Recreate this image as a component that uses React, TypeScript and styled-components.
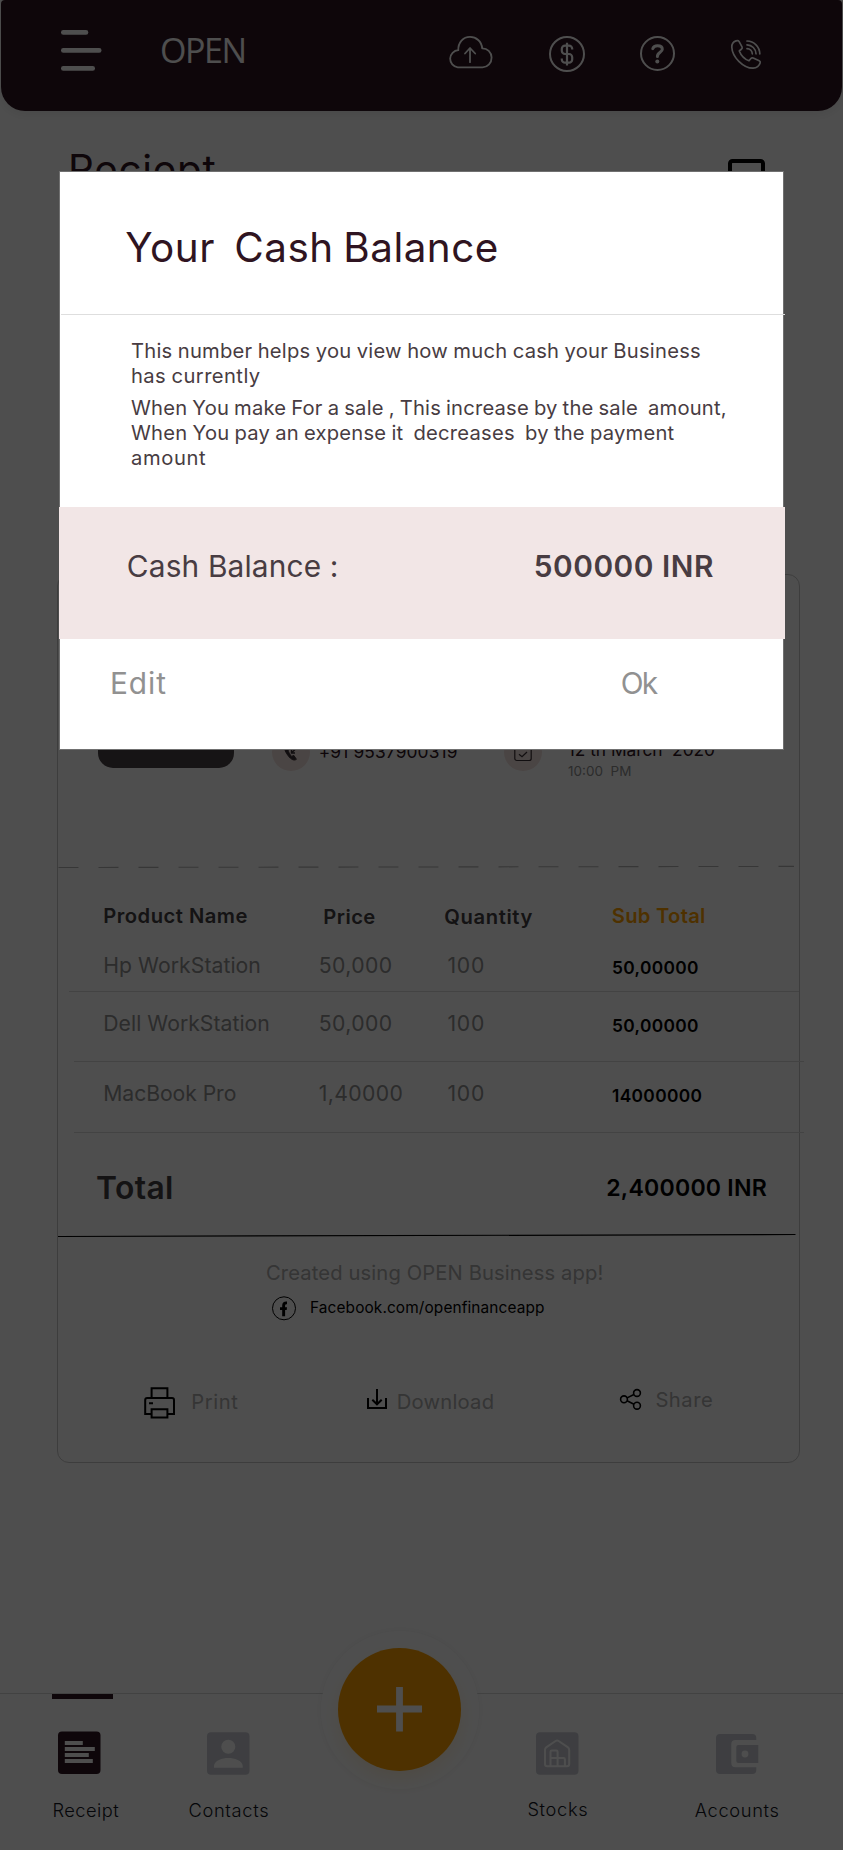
import React from "react";
import styled, { createGlobalStyle } from "styled-components";

const ink = "#2f1421";
const amber = "#ffa200";
const idle = "#c9ccd4";

const GlobalStyle = createGlobalStyle`
  body { margin: 0; background: #fff; }
  * { box-sizing: border-box; }
  svg { display: block; flex: none; overflow: visible; }
`;

const Screen = styled.div`
  position: relative;
  width: 843px;
  height: 1850px;
  display: flex;
  flex-direction: column;
  background: #fff;
  overflow: hidden;
  font-family: Inter, "Liberation Sans", sans-serif;
`;

const Text = styled.span<{ size: number; line?: number; track?: number; words?: number; weight?: number; color?: string; left?: number; top?: number }>`
  display: block;
  white-space: pre;
  font-size: ${(p) => p.size}px;
  line-height: ${(p) => p.line ?? 24}px;
  letter-spacing: ${(p) => p.track ?? 0}px;
  word-spacing: ${(p) => p.words ?? 0}px;
  font-weight: ${(p) => p.weight ?? 400};
  color: ${(p) => p.color ?? "#000"};
  margin-left: ${(p) => p.left ?? 0}px;
  margin-top: ${(p) => p.top ?? 0}px;
`;

/* ---------- top bar ---------- */

const TopBar = styled.header`
  display: flex;
  align-items: flex-start;
  flex: none;
  height: 111px;
  margin: 0 1px;
  padding: 30px 0 0 60px;
  background: ${ink};
  border-radius: 4px 4px 24px 24px;
  box-shadow: 0 3px 12px rgba(0, 0, 0, 0.08);
`;

const Brand = styled.h1`
  margin: 0 0 0 58px;
  width: 288px;
  font: 400 34px/40px "Open Sans", sans-serif;
  letter-spacing: -1.4px;
  color: #fff;
`;

const TopIcons = styled.div`
  display: flex;
  align-items: flex-start;
`;

const IconSlot = styled.div<{ left?: number; top?: number }>`
  flex: none;
  margin-left: ${(p) => p.left ?? 0}px;
  margin-top: ${(p) => p.top ?? 0}px;
`;

const PageHead = styled.div`
  display: flex;
  justify-content: space-between;
  align-items: flex-start;
  flex: none;
  height: 463px;
  padding: 34px 78px 0 68px;
`;

/* ---------- receipt card ---------- */

const Card = styled.section`
  flex: none;
  width: 743px;
  height: 889px;
  margin-left: 57px;
  padding-top: 148px;
  border: 1px solid #c8c8c8;
  border-radius: 12px;
`;

const InfoRow = styled.div`
  display: flex;
  align-items: flex-start;
  height: 60px;
  padding-left: 40px;
`;

const PayButton = styled.div`
  width: 136px;
  height: 45px;
  border-radius: 15px;
  background: #494145;
`;

const Bubble = styled.div<{ left: number }>`
  display: flex;
  align-items: center;
  justify-content: center;
  width: 38px;
  height: 38px;
  margin: 10px 0 0 ${(p) => p.left}px;
  border-radius: 50%;
  background: #f3e1dd;
`;

const DashLine = styled.svg`
  margin-top: 82px;
`;

const HeadRow = styled.div`
  display: grid;
  grid-template-columns: 220px 121px 167.5px 1fr;
  height: 84px;
  padding: 34.7px 0 0 45.3px;
`;

const ItemRow = styled.div<{ height: number; pad: number }>`
  display: grid;
  grid-template-columns: 215.5px 128.7px 164.5px 1fr;
  align-content: start;
  height: ${(p) => p.height}px;
  padding: ${(p) => p.pad}px 0 0 45.3px;
`;

const Rule = styled.div<{ left: number; over: number }>`
  height: 1px;
  margin: 0 ${(p) => -p.over}px 0 ${(p) => p.left}px;
  background: #dcdcdc;
`;

const TotalRow = styled.div`
  display: flex;
  justify-content: space-between;
  height: 100px;
  padding: 37px 32px 0 38px;
`;

const TotalLine = styled.svg`
  margin-left: -0.5px;
`;

const FacebookRow = styled.div`
  display: flex;
  margin: 10.5px 0 0 214px;
`;

const Actions = styled.div`
  display: flex;
  align-items: flex-start;
  margin-top: 67.5px;
  padding-left: 86px;
`;

/* ---------- bottom navigation ---------- */

const BottomNav = styled.nav`
  position: relative;
  display: flex;
  flex: none;
  height: 157px;
  margin-top: 230px;
  border-top: 1px solid #d6d6d6;
`;

const ActiveBar = styled.div`
  position: absolute;
  top: 0;
  left: 52px;
  width: 61px;
  height: 4.7px;
  background: ${ink};
`;

const NavItem = styled.div<{ width: number; left: number; inset: number }>`
  width: ${(p) => p.width}px;
  margin-left: ${(p) => p.left}px;
  padding-top: 38px;
  svg {
    margin-left: ${(p) => p.inset}px;
    height: 43px;
  }
`;

const AddRing = styled.div`
  position: absolute;
  left: 320.7px;
  top: -63.5px;
  display: flex;
  align-items: center;
  justify-content: center;
  width: 158px;
  height: 158px;
  border-radius: 50%;
  background: #fff;
  box-shadow: 0 0 10px rgba(0, 0, 0, 0.06);
`;

const AddButton = styled.div`
  display: flex;
  align-items: center;
  justify-content: center;
  width: 122.5px;
  height: 122.5px;
  border-radius: 50%;
  background: ${amber};
  box-shadow: 0 8px 18px rgba(255, 162, 0, 0.14);
`;

/* ---------- dialog ---------- */

const Scrim = styled.div`
  position: absolute;
  inset: 0;
  background: rgba(0, 0, 0, 0.696);
`;

const Dialog = styled.div`
  position: absolute;
  left: 59px;
  top: 171px;
  width: 725px;
  height: 579px;
  border: 1px solid #707070;
  background: #fff;
`;

const DialogHead = styled.div`
  height: 142px;
  padding: 51.2px 0 0 65.3px;
`;

const DialogRule = styled.div`
  height: 1px;
  margin: 0 -2px 0 1px;
  background: #dedede;
`;

const DialogBody = styled.div`
  height: 192px;
  padding: 23.3px 0 0 71px;
`;

const Paragraph = styled.div`
  margin-bottom: 7px;
`;

const Balance = styled.div`
  display: flex;
  height: 132px;
  margin: 0 -2px 0 -1px;
  padding: 41.2px 0 0 67.8px;
  background: #f2e6e6;
`;

const Choices = styled.div`
  display: flex;
  padding: 26px 0 0 50px;
`;

const bodyTone = "#483c42";

const BodyLine = ({ track, words = -0.8, children }: { track: number; words?: number; children: string }) => (
  <Text size={20.2} line={25} track={track} words={words} color={bodyTone}>{children}</Text>
);

const items = [
  { name: "Hp WorkStation", nameTrack: 0.05, price: "50,000", priceTrack: 0.41, sub: "50,00000", height: 38, pad: 0.3, left: 10.5, over: 0 },
  { name: "Dell WorkStation", nameTrack: 0.03, price: "50,000", priceTrack: 0.41, sub: "50,00000", height: 69, pad: 19.3, left: 15.5, over: 5 },
  { name: "MacBook Pro", nameTrack: -0.08, price: "1,40000", priceTrack: 0.35, sub: "14000000", height: 70, pad: 19.3, left: 15.5, over: 5 },
];

const itemTone = "#8f8f8f";
const headTone = "#443e41";
const mutedTone = "#acacac";

function Header() {
  return (
    <TopBar>
      <svg width="41" height="42" fill="#fff">
        <rect x="0" y="0" width="27.3" height="4.7" rx="2.3" />
        <rect x="0" y="18" width="40.5" height="4.7" rx="2.3" />
        <rect x="0" y="36" width="34" height="4.7" rx="2.3" />
      </svg>
      <Brand>OPEN</Brand>
      <TopIcons>
        <IconSlot top={6}>
          <svg width="44" height="33" fill="none" stroke="#fff" strokeWidth="1.8" strokeLinecap="round" strokeLinejoin="round">
            <path d="M9.8 31.3H34.6A9.1 9.4 0 0 0 34.2 12.3C33.6 5.3 28.2 .9 22 .9C15.2 .9 10 6.3 10.3 14.2A8.8 8.6 0 0 0 9.8 31.3Z" />
            <path d="M22 26.2V12.2M17 17.5L22 12L27.2 17.5" />
          </svg>
        </IconSlot>
        <IconSlot left={57} top={6}>
          <svg width="36" height="36" fill="none" stroke="#fff" strokeWidth="2">
            <circle cx="18" cy="18" r="17" />
            <path d="M23.2 13.6v-.8a3.2 3.2 0 0 0-3.2-3.2h-4a3.2 3.2 0 0 0-3.2 3.2v2a3.2 3.2 0 0 0 3.2 3.2h4a3.2 3.2 0 0 1 3.2 3.2v2.2a3.2 3.2 0 0 1-3.2 3.2h-4a3.2 3.2 0 0 1-3.2-3.2v-.8M18 6.7V29.5" strokeWidth="2.2" />
          </svg>
        </IconSlot>
        <IconSlot left={55} top={6}>
          <svg width="35" height="35" fill="none" stroke="#fff" strokeWidth="2">
            <circle cx="17.5" cy="17.5" r="16.5" />
            <path d="M12.8 12.6C13.4 10.6 15.2 9.8 17.6 9.8C20.6 9.8 22.3 11.2 22.3 13.3C22.3 16.6 17.4 16.2 17.4 20.6" strokeWidth="3" strokeLinecap="round" />
            <circle cx="17.3" cy="25.4" r="2" fill="#fff" stroke="none" />
          </svg>
        </IconSlot>
        <IconSlot left={56} top={10}>
          <svg width="30" height="30" fill="none" stroke="#fff" strokeWidth="1.7" strokeLinecap="round" strokeLinejoin="round">
            <path d="M5 .9C2.5 1.8.7 4.5.8 7.2C1.3 17 12 28 22 28.2C25.5 28 28.3 25.8 29.2 22.8C29.5 21.8 29 21.2 28.2 20.8L22.2 18C21.3 17.6 20.5 17.8 19.9 18.5L18 20.8C14 19.3 9.8 15 8.3 11L10.6 9C11.2 8.4 11.4 7.6 11 6.8L8 1.4C7.4.5 6.4.4 5 .9Z" />
            <path d="M16 1A13 13 0 0 1 28.8 13.8M16 4.8A9.2 9.2 0 0 1 25 13.8M16 8.6A5.4 5.4 0 0 1 21.3 13.8" />
          </svg>
        </IconSlot>
      </TopIcons>
    </TopBar>
  );
}

function Receipt() {
  return (
    <Card>
      <InfoRow>
        <PayButton />
        <Bubble left={38}>
          <svg width="16" height="20" viewBox="0 0 16 20" fill="#3a3034" stroke="#3a3034">
            <path d="M2 1.5C.5 4 1.5 9 5 13.5C8 17.5 11 19 13.4 17.3L10.8 13.4L8.6 14.4C6.8 12.6 5.4 10.2 4.9 7.6L6.6 6.2L4.5 1.6Z" strokeLinejoin="round" />
            <path d="M13.5 6L8.5 11M8.5 7.5V11H12" fill="none" strokeWidth="1.4" />
          </svg>
        </Bubble>
        <Text size={17.33} track={0.15} color={ink} left={8.7} top={17.2}>+91 9537900319</Text>
        <Bubble left={46.2}>
          <svg width="18" height="18" fill="none" stroke="#3a3034" strokeWidth="1.2">
            <rect x=".8" y="1.5" width="16.4" height="16" rx="2" />
            <path d="M1 5.5H17M5 0V3M13 0V3M5 11.2L8 13.8L13 9" />
          </svg>
        </Bubble>
        <div>
          <Text size={17.33} track={-0.04} color={ink} left={26} top={14.7}>12 th March  2020</Text>
          <Text size={13.5} line={20} color="#8f8f8f" left={26.2} top={-0.6}>10:00  PM</Text>
        </div>
      </InfoRow>
      <DashLine width="741" height="4">
        <path d="M0.5 2.5L736 1.4" stroke="#b4b4b4" strokeWidth="1.1" strokeDasharray="20 20" />
      </DashLine>
      <HeadRow>
        <Text size={20.2} track={0.48} weight={600} color={headTone}>Product Name</Text>
        <Text size={20.2} track={0.45} weight={600} color={headTone} top={1}>Price</Text>
        <Text size={20.2} track={0.62} weight={600} color={headTone} top={1}>Quantity</Text>
        <Text size={20.2} track={0.28} weight={600} color={amber}>Sub Total</Text>
      </HeadRow>
      {items.map((it) => (
        <React.Fragment key={it.name}>
          <ItemRow height={it.height} pad={it.pad}>
            <Text size={21.2} track={it.nameTrack} color={itemTone}>{it.name}</Text>
            <Text size={21.2} track={it.priceTrack} color={itemTone}>{it.price}</Text>
            <Text size={21.2} track={0.77} color={itemTone}>100</Text>
            <Text size={17.33} track={0.36} weight={600} top={3}>{it.sub}</Text>
          </ItemRow>
          <Rule left={it.left} over={it.over} />
        </React.Fragment>
      ))}
      <TotalRow>
        <Text size={31.8} line={36} track={0.4} weight={600} color={headTone}>Total</Text>
        <Text size={23.1} line={36} track={0.22} weight={600}>2,400000 INR</Text>
      </TotalRow>
      <TotalLine width="738" height="5">
        <path d="M0 3.5L737.5 1.5" stroke="#000" strokeWidth="1.2" />
      </TotalLine>
      <Text size={20.2} track={0.12} color={mutedTone} left={208} top={23.3}>Created using OPEN Business app!</Text>
      <FacebookRow>
        <svg width="24" height="24" fill="none">
          <circle cx="12" cy="12.3" r="11.5" stroke="#000" />
          <path d="M10.2 20.3V13.9H8V11.2H10.2V9.4C10.2 6.6 11.8 5.4 15 5.6V8.3C13.5 8.2 13.1 8.7 13.1 9.8V11.2H15L14.7 13.9H13.1V20.3Z" fill="#000" />
        </svg>
        <Text size={15.4} track={0.12} left={14}>Facebook.com/openfinanceapp</Text>
      </FacebookRow>
      <Actions>
        <svg width="31" height="32" fill="none" stroke="#000" strokeWidth="2">
          <path d="M7.6 11V1.2H23.4V11M7 27H1.2V13q0-2 2-2H28q2 0 2 2V27H24M7.6 22.2H23.4V30.4H7.6ZM5 16.3H9" />
        </svg>
        <Text size={20.2} track={0.58} color={mutedTone} left={16.3} top={2.8}>Print</Text>
        <IconSlot left={128.6} top={2}>
          <svg width="20" height="20" fill="none" stroke="#000" strokeWidth="2">
            <path d="M1 9V19H19V9M10 0V15M5.3 10.7L10 15.3L14.7 10.7" />
          </svg>
        </IconSlot>
        <Text size={20.2} track={0.22} color={mutedTone} left={9.8} top={2.8}>Download</Text>
        <IconSlot left={126} top={2}>
          <svg width="22" height="21" fill="none" stroke="#000" strokeWidth="1.6">
            <circle cx="4" cy="10.3" r="3.4" />
            <circle cx="17" cy="4" r="3.4" />
            <circle cx="17" cy="16.7" r="3.4" />
            <path d="M7.1 8.9L13.9 5.5M7.1 11.8L13.9 15.2" />
          </svg>
        </IconSlot>
        <Text size={20.2} track={0.5} color={mutedTone} left={13.2} top={1}>Share</Text>
      </Actions>
    </Card>
  );
}

const NavLabel = ({ track, top, children }: { track: number; top: number; children: string }) => (
  <Text size={18.3} track={track} weight={300} color="#111522" top={top}>{children}</Text>
);

function Navigation() {
  return (
    <BottomNav>
      <ActiveBar />
      <NavItem width={80} left={52.4} inset={6}>
        <svg width="43">
          <rect y="-.5" width="42.5" height="42.5" rx="4" fill={ink} />
          <path d="M6.8 9H24.8V13H6.8ZM6.8 15H36.8V19H6.8ZM6.8 21H30.8V25H6.8ZM6.8 27H34.8V31H6.8Z" fill="#fff" />
        </svg>
        <NavLabel track={0.49} top={23.3}>Receipt</NavLabel>
      </NavItem>
      <NavItem width={100} left={56} inset={19}>
        <svg width="43">
          <rect width="42.5" height="42.5" y=".3" rx="4" fill={idle} />
          <circle cx="21.3" cy="14.8" r="7" fill="#fff" />
          <path d="M7 35.7V34C7 28.4 15.5 25.9 21.3 25.9S35.7 28.4 35.7 34V35.7Z" fill="#fff" />
        </svg>
        <NavLabel track={0.68} top={23.3}>Contacts</NavLabel>
      </NavItem>
      <NavItem width={80} left={239} inset={8.2}>
        <svg width="43">
          <rect width="42.5" height="42.5" y=".3" rx="4" fill={idle} />
          <g fill="none" stroke="#fff" strokeWidth="2">
            <path d="M9 18Q9 16.2 10.2 15.4L19.6 9Q21.1 8 22.6 9L32 15.4Q33.2 16.2 33.2 18V32Q33.2 34.3 31 34.3H11.2Q9 34.3 9 32Z" />
            <path d="M14.5 34V19.7q0-1.3 1.3-1.3h4.5q1.3 0 1.3 1.3V34M14.5 26H27.5q1.4 0 1.4 1.4V34" />
          </g>
        </svg>
        <NavLabel track={0.65} top={22.3}>Stocks</NavLabel>
      </NavItem>
      <NavItem width={100} left={87.4} inset={21}>
        <svg width="43">
          <path d="M4 2H36.3Q40.3 2 40.3 6V8H19.5Q15.3 8 15.3 12.2V31Q15.3 35.2 19.5 35.2H40.3V38Q40.3 42 36.3 42H4Q0 42 0 38V6Q0 2 4 2Z" fill={idle} />
          <path d="M22.3 13H42.3V31H22.3Q20.3 31 20.3 29V15Q20.3 13 22.3 13Z" fill={idle} />
          <circle cx="29" cy="22" r="3.4" fill="#fff" />
        </svg>
        <NavLabel track={0.62} top={23.3}>Accounts</NavLabel>
      </NavItem>
      <AddRing>
        <AddButton>
          <svg width="45" height="45">
            <path d="M22.5 0V44.5M0 22H45" stroke="#fff" strokeWidth="6.8" />
          </svg>
        </AddButton>
      </AddRing>
    </BottomNav>
  );
}

function CashBalanceDialog() {
  return (
    <Dialog role="dialog">
      <DialogHead>
        <Text size={40.4} line={50} track={0.5} words={-2.2} color={ink}>{"Your  Cash Balance"}</Text>
      </DialogHead>
      <DialogRule />
      <DialogBody>
        <Paragraph>
          <BodyLine track={0.23} words={-0.6}>This number helps you view how much cash your Business</BodyLine>
          <BodyLine track={0.42}>has currently</BodyLine>
        </Paragraph>
        <Paragraph>
          <BodyLine track={0.18}>{"When You make For a sale , This increase by the sale  amount,"}</BodyLine>
          <BodyLine track={0.22}>{"When You pay an expense it  decreases  by the payment"}</BodyLine>
          <BodyLine track={0.6}>amount</BodyLine>
        </Paragraph>
      </DialogBody>
      <Balance>
        <Text size={29.85} line={36} track={0.15} color={bodyTone}>Cash Balance :</Text>
        <Text size={29.85} line={36} track={0.5} weight={600} color={bodyTone} left={195.2}>500000 INR</Text>
      </Balance>
      <Choices>
        <Text size={29.85} line={36} track={0.9} color="#919191">Edit</Text>
        <Text size={29.85} line={36} track={-1.8} color="#919191" left={454}>Ok</Text>
      </Choices>
    </Dialog>
  );
}

export default function App() {
  return (
    <Screen>
      <GlobalStyle />
      <Header />
      <PageHead>
        <Text size={40.4} line={50} track={0.75} color={ink}>Reciept</Text>
        <IconSlot top={14}>
          <svg width="37" height="42" fill="none" stroke="#000" strokeWidth="4">
            <rect x="2" y="2" width="33" height="38" rx="2.5" />
          </svg>
        </IconSlot>
      </PageHead>
      <Receipt />
      <Navigation />
      <Scrim />
      <CashBalanceDialog />
    </Screen>
  );
}
